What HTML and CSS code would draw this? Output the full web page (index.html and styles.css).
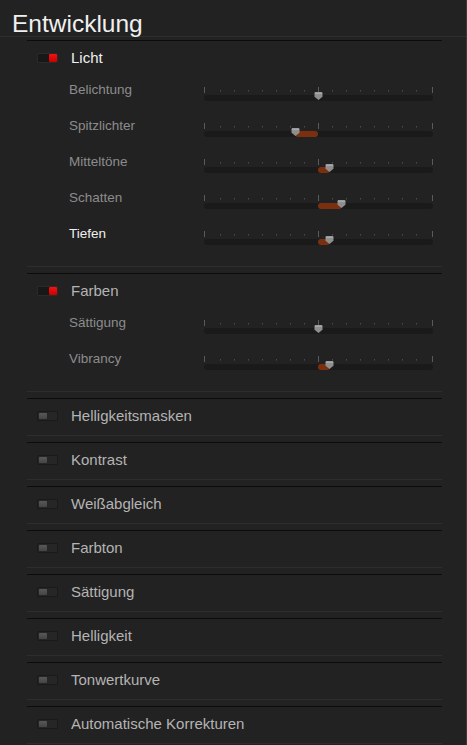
FILE: index.html
```html
<!DOCTYPE html>
<html lang="de">
<head>
<meta charset="utf-8">
<title>Entwicklung</title>
<link rel="stylesheet" href="styles.css">
</head>
<body>
<div class="panel">
  <header class="title-bar"><h1 class="title">Entwicklung</h1></header>
  <div class="sections">

    <section class="group">
      <div class="group-head"><span class="toggle on"><span class="knob"></span></span><span class="group-name active">Licht</span></div>
      <div class="row"><span class="row-label">Belichtung</span>
        <div class="slider">
          <svg class="ticks" width="229" height="6" viewBox="0 0 229 6"><g fill="#5a5a5a"><rect x="0" y="0" width="1" height="6"/><rect x="114" y="0" width="1" height="6"/><rect x="228" y="0" width="1" height="6"/></g><g fill="#4c4c4c"><rect x="16" y="3" width="1" height="1.5"/><rect x="30" y="3" width="1" height="1.5"/><rect x="44" y="3" width="1" height="1.5"/><rect x="58" y="3" width="1" height="1.5"/><rect x="72" y="3" width="1" height="1.5"/><rect x="86" y="3" width="1" height="1.5"/><rect x="100" y="3" width="1" height="1.5"/><rect x="128" y="3" width="1" height="1.5"/><rect x="142" y="3" width="1" height="1.5"/><rect x="156" y="3" width="1" height="1.5"/><rect x="170" y="3" width="1" height="1.5"/><rect x="184" y="3" width="1" height="1.5"/><rect x="198" y="3" width="1" height="1.5"/><rect x="212" y="3" width="1" height="1.5"/></g></svg>
          <div class="track"></div>
          <svg class="thumb" style="left:110px" width="9" height="8" viewBox="0 0 9 8"><path d="M0.5 1.3Q0.5 0 1.8 0H7.2Q8.5 0 8.5 1.3V4.8L4.5 8L0.5 4.8Z" fill="#8e8e8e"/><rect x="1" y="0.5" width="7" height="1.6" fill="#a8a8a8"/></svg>
        </div>
      </div>
      <div class="row"><span class="row-label">Spitzlichter</span>
        <div class="slider">
          <svg class="ticks" width="229" height="6" viewBox="0 0 229 6"><g fill="#5a5a5a"><rect x="0" y="0" width="1" height="6"/><rect x="114" y="0" width="1" height="6"/><rect x="228" y="0" width="1" height="6"/></g><g fill="#4c4c4c"><rect x="16" y="3" width="1" height="1.5"/><rect x="30" y="3" width="1" height="1.5"/><rect x="44" y="3" width="1" height="1.5"/><rect x="58" y="3" width="1" height="1.5"/><rect x="72" y="3" width="1" height="1.5"/><rect x="86" y="3" width="1" height="1.5"/><rect x="100" y="3" width="1" height="1.5"/><rect x="128" y="3" width="1" height="1.5"/><rect x="142" y="3" width="1" height="1.5"/><rect x="156" y="3" width="1" height="1.5"/><rect x="170" y="3" width="1" height="1.5"/><rect x="184" y="3" width="1" height="1.5"/><rect x="198" y="3" width="1" height="1.5"/><rect x="212" y="3" width="1" height="1.5"/></g></svg>
          <div class="track"><span class="fill" style="left:91px;width:23px"></span></div>
          <svg class="thumb" style="left:87px" width="9" height="8" viewBox="0 0 9 8"><path d="M0.5 1.3Q0.5 0 1.8 0H7.2Q8.5 0 8.5 1.3V4.8L4.5 8L0.5 4.8Z" fill="#8e8e8e"/><rect x="1" y="0.5" width="7" height="1.6" fill="#a8a8a8"/></svg>
        </div>
      </div>
      <div class="row"><span class="row-label">Mitteltöne</span>
        <div class="slider">
          <svg class="ticks" width="229" height="6" viewBox="0 0 229 6"><g fill="#5a5a5a"><rect x="0" y="0" width="1" height="6"/><rect x="114" y="0" width="1" height="6"/><rect x="228" y="0" width="1" height="6"/></g><g fill="#4c4c4c"><rect x="16" y="3" width="1" height="1.5"/><rect x="30" y="3" width="1" height="1.5"/><rect x="44" y="3" width="1" height="1.5"/><rect x="58" y="3" width="1" height="1.5"/><rect x="72" y="3" width="1" height="1.5"/><rect x="86" y="3" width="1" height="1.5"/><rect x="100" y="3" width="1" height="1.5"/><rect x="128" y="3" width="1" height="1.5"/><rect x="142" y="3" width="1" height="1.5"/><rect x="156" y="3" width="1" height="1.5"/><rect x="170" y="3" width="1" height="1.5"/><rect x="184" y="3" width="1" height="1.5"/><rect x="198" y="3" width="1" height="1.5"/><rect x="212" y="3" width="1" height="1.5"/></g></svg>
          <div class="track"><span class="fill" style="left:114px;width:12px"></span></div>
          <svg class="thumb" style="left:121px" width="9" height="8" viewBox="0 0 9 8"><path d="M0.5 1.3Q0.5 0 1.8 0H7.2Q8.5 0 8.5 1.3V4.8L4.5 8L0.5 4.8Z" fill="#8e8e8e"/><rect x="1" y="0.5" width="7" height="1.6" fill="#a8a8a8"/></svg>
        </div>
      </div>
      <div class="row"><span class="row-label">Schatten</span>
        <div class="slider">
          <svg class="ticks" width="229" height="6" viewBox="0 0 229 6"><g fill="#5a5a5a"><rect x="0" y="0" width="1" height="6"/><rect x="114" y="0" width="1" height="6"/><rect x="228" y="0" width="1" height="6"/></g><g fill="#4c4c4c"><rect x="16" y="3" width="1" height="1.5"/><rect x="30" y="3" width="1" height="1.5"/><rect x="44" y="3" width="1" height="1.5"/><rect x="58" y="3" width="1" height="1.5"/><rect x="72" y="3" width="1" height="1.5"/><rect x="86" y="3" width="1" height="1.5"/><rect x="100" y="3" width="1" height="1.5"/><rect x="128" y="3" width="1" height="1.5"/><rect x="142" y="3" width="1" height="1.5"/><rect x="156" y="3" width="1" height="1.5"/><rect x="170" y="3" width="1" height="1.5"/><rect x="184" y="3" width="1" height="1.5"/><rect x="198" y="3" width="1" height="1.5"/><rect x="212" y="3" width="1" height="1.5"/></g></svg>
          <div class="track"><span class="fill" style="left:114px;width:24px"></span></div>
          <svg class="thumb" style="left:133px" width="9" height="8" viewBox="0 0 9 8"><path d="M0.5 1.3Q0.5 0 1.8 0H7.2Q8.5 0 8.5 1.3V4.8L4.5 8L0.5 4.8Z" fill="#8e8e8e"/><rect x="1" y="0.5" width="7" height="1.6" fill="#a8a8a8"/></svg>
        </div>
      </div>
      <div class="row"><span class="row-label selected">Tiefen</span>
        <div class="slider">
          <svg class="ticks" width="229" height="6" viewBox="0 0 229 6"><g fill="#5a5a5a"><rect x="0" y="0" width="1" height="6"/><rect x="114" y="0" width="1" height="6"/><rect x="228" y="0" width="1" height="6"/></g><g fill="#4c4c4c"><rect x="16" y="3" width="1" height="1.5"/><rect x="30" y="3" width="1" height="1.5"/><rect x="44" y="3" width="1" height="1.5"/><rect x="58" y="3" width="1" height="1.5"/><rect x="72" y="3" width="1" height="1.5"/><rect x="86" y="3" width="1" height="1.5"/><rect x="100" y="3" width="1" height="1.5"/><rect x="128" y="3" width="1" height="1.5"/><rect x="142" y="3" width="1" height="1.5"/><rect x="156" y="3" width="1" height="1.5"/><rect x="170" y="3" width="1" height="1.5"/><rect x="184" y="3" width="1" height="1.5"/><rect x="198" y="3" width="1" height="1.5"/><rect x="212" y="3" width="1" height="1.5"/></g></svg>
          <div class="track"><span class="fill" style="left:114px;width:12px"></span></div>
          <svg class="thumb" style="left:121px" width="9" height="8" viewBox="0 0 9 8"><path d="M0.5 1.3Q0.5 0 1.8 0H7.2Q8.5 0 8.5 1.3V4.8L4.5 8L0.5 4.8Z" fill="#8e8e8e"/><rect x="1" y="0.5" width="7" height="1.6" fill="#a8a8a8"/></svg>
        </div>
      </div>
    </section>

    <section class="group">
      <div class="group-head"><span class="toggle on"><span class="knob"></span></span><span class="group-name">Farben</span></div>
      <div class="row"><span class="row-label">Sättigung</span>
        <div class="slider">
          <svg class="ticks" width="229" height="6" viewBox="0 0 229 6"><g fill="#5a5a5a"><rect x="0" y="0" width="1" height="6"/><rect x="114" y="0" width="1" height="6"/><rect x="228" y="0" width="1" height="6"/></g><g fill="#4c4c4c"><rect x="16" y="3" width="1" height="1.5"/><rect x="30" y="3" width="1" height="1.5"/><rect x="44" y="3" width="1" height="1.5"/><rect x="58" y="3" width="1" height="1.5"/><rect x="72" y="3" width="1" height="1.5"/><rect x="86" y="3" width="1" height="1.5"/><rect x="100" y="3" width="1" height="1.5"/><rect x="128" y="3" width="1" height="1.5"/><rect x="142" y="3" width="1" height="1.5"/><rect x="156" y="3" width="1" height="1.5"/><rect x="170" y="3" width="1" height="1.5"/><rect x="184" y="3" width="1" height="1.5"/><rect x="198" y="3" width="1" height="1.5"/><rect x="212" y="3" width="1" height="1.5"/></g></svg>
          <div class="track"></div>
          <svg class="thumb" style="left:110px" width="9" height="8" viewBox="0 0 9 8"><path d="M0.5 1.3Q0.5 0 1.8 0H7.2Q8.5 0 8.5 1.3V4.8L4.5 8L0.5 4.8Z" fill="#8e8e8e"/><rect x="1" y="0.5" width="7" height="1.6" fill="#a8a8a8"/></svg>
        </div>
      </div>
      <div class="row"><span class="row-label">Vibrancy</span>
        <div class="slider">
          <svg class="ticks" width="229" height="6" viewBox="0 0 229 6"><g fill="#5a5a5a"><rect x="0" y="0" width="1" height="6"/><rect x="114" y="0" width="1" height="6"/><rect x="228" y="0" width="1" height="6"/></g><g fill="#4c4c4c"><rect x="16" y="3" width="1" height="1.5"/><rect x="30" y="3" width="1" height="1.5"/><rect x="44" y="3" width="1" height="1.5"/><rect x="58" y="3" width="1" height="1.5"/><rect x="72" y="3" width="1" height="1.5"/><rect x="86" y="3" width="1" height="1.5"/><rect x="100" y="3" width="1" height="1.5"/><rect x="128" y="3" width="1" height="1.5"/><rect x="142" y="3" width="1" height="1.5"/><rect x="156" y="3" width="1" height="1.5"/><rect x="170" y="3" width="1" height="1.5"/><rect x="184" y="3" width="1" height="1.5"/><rect x="198" y="3" width="1" height="1.5"/><rect x="212" y="3" width="1" height="1.5"/></g></svg>
          <div class="track"><span class="fill" style="left:114px;width:12px"></span></div>
          <svg class="thumb" style="left:121px" width="9" height="8" viewBox="0 0 9 8"><path d="M0.5 1.3Q0.5 0 1.8 0H7.2Q8.5 0 8.5 1.3V4.8L4.5 8L0.5 4.8Z" fill="#8e8e8e"/><rect x="1" y="0.5" width="7" height="1.6" fill="#a8a8a8"/></svg>
        </div>
      </div>
    </section>

    <section class="group collapsed"><div class="group-head"><span class="toggle off"><span class="knob"></span></span><span class="group-name">Helligkeitsmasken</span></div></section>
    <section class="group collapsed"><div class="group-head"><span class="toggle off"><span class="knob"></span></span><span class="group-name">Kontrast</span></div></section>
    <section class="group collapsed"><div class="group-head"><span class="toggle off"><span class="knob"></span></span><span class="group-name">Weißabgleich</span></div></section>
    <section class="group collapsed"><div class="group-head"><span class="toggle off"><span class="knob"></span></span><span class="group-name">Farbton</span></div></section>
    <section class="group collapsed"><div class="group-head"><span class="toggle off"><span class="knob"></span></span><span class="group-name">Sättigung</span></div></section>
    <section class="group collapsed"><div class="group-head"><span class="toggle off"><span class="knob"></span></span><span class="group-name">Helligkeit</span></div></section>
    <section class="group collapsed"><div class="group-head"><span class="toggle off"><span class="knob"></span></span><span class="group-name">Tonwertkurve</span></div></section>
    <section class="group collapsed"><div class="group-head"><span class="toggle off"><span class="knob"></span></span><span class="group-name">Automatische Korrekturen</span></div></section>

  </div>
</div>
</body>
</html>
```

FILE: styles.css
```css
* { box-sizing: border-box; }

html, body {
  margin: 0;
  padding: 0;
  background: #222222;
}

body {
  font-family: "Liberation Sans", Arial, sans-serif;
  color: #b4b4b4;
}

.panel {
  width: 467px;
  min-height: 745px;
  border-right: 1px solid #3a3a3a;
  overflow: hidden;
}

.title-bar {
  height: 37px;
  padding: 12px 0 0 12px;
  border-bottom: 1px solid #2e2e2e;
}

.title {
  margin: 0;
  font-size: 24.5px;
  line-height: 24px;
  font-weight: normal;
  color: #f0f0f0;
}

.sections {
  margin: 3px 0 0 27px;
  width: 415px;
}

.group {
  border-top: 1px solid #0c0c0c;
  border-bottom: 1px solid #2d2d2d;
  margin-bottom: 6px;
  padding-bottom: 9px;
}

.group.collapsed {
  padding-bottom: 0;
}

.group-head {
  height: 36px;
  display: flex;
  align-items: center;
}

.toggle {
  width: 21px;
  height: 10px;
  margin-left: 10px;
  margin-right: 13px;
  margin-top: -2px;
  display: flex;
  align-items: stretch;
  border-radius: 1px;
}

.toggle.on {
  background: #181818;
  justify-content: flex-end;
  border: 1px solid #2a2a2a;
}

.toggle.on .knob {
  width: 8px;
  background: linear-gradient(#f41212, #cc0000);
  border-radius: 1px;
}

.toggle.off {
  background: #262626;
  border: 1px solid #1a1a1a;
  justify-content: flex-start;
  padding: 1px;
}

.toggle.off .knob {
  width: 8px;
  background: linear-gradient(#585858, #454545);
  border-radius: 1px;
}

.group-name {
  font-size: 15px;
  line-height: 34px;
  margin-top: -2px;
  color: #b4b4b4;
}

.group-name.active {
  color: #f0f0f0;
}

.row {
  height: 36px;
  display: flex;
  align-items: flex-start;
  padding-left: 42px;
}

.row-label {
  width: 135px;
  font-size: 13.5px;
  line-height: 26px;
  color: #8c8c8c;
}

.row-label.selected {
  color: #f0f0f0;
}

.slider {
  position: relative;
  width: 229px;
  margin-top: 10px;
}

.ticks {
  display: block;
}

.track {
  position: relative;
  margin-top: 2px;
  height: 6px;
  border-radius: 3px;
  background: #1a1a1a;
}

.fill {
  position: absolute;
  top: 0;
  height: 6px;
  border-radius: 3px;
  background: #7a300f;
}

.thumb {
  position: absolute;
  top: 5px;
  display: block;
}
```
